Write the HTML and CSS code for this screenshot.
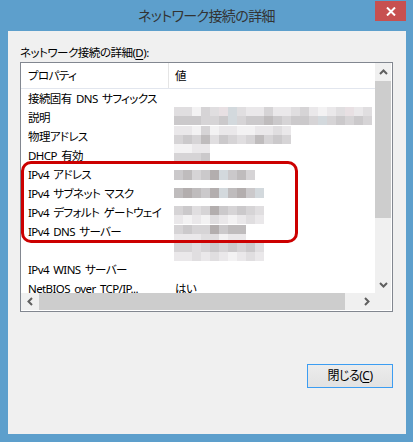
FILE: index.html
```html
<!DOCTYPE html>
<html lang="ja">
<head>
<meta charset="utf-8">
<title>ネットワーク接続の詳細</title>
<link rel="stylesheet" href="styles.css">
</head>
<body>
<div class="window">
  <div class="titlebar">
    <div class="title">ネットワーク接続の詳細</div>
    <div class="close">
      <svg width="10" height="9" viewBox="0 0 10 9"><path d="M1 0.5 L9 8.5 M9 0.5 L1 8.5" stroke="#fff" stroke-width="2" fill="none"/></svg>
    </div>
  </div>
  <div class="client">
    <div class="label">ネットワーク接続の詳細(<u>D</u>):</div>
    <div class="listbox">
      <div class="list">
        <div class="header">
          <div class="hcell name">プロパティ</div>
          <div class="hcell val">値</div>
        </div>
        <div class="row"><div class="name">接続固有 DNS サフィックス</div><div class="val"></div></div>
        <div class="row"><div class="name">説明</div><div class="val">
          <div class="mosaic m-up">
            <div class="mrow"><i class="g2"></i><i class="g2"></i><i class="g0"></i><i class="g3"></i><i class="g2"></i><i class="g8"></i><i class="g7"></i><i class="g2"></i><i class="g1"></i><i class="g1"></i><i class="g3"></i><i class="g1"></i><i class="g1"></i><i class="g2"></i><i class="g3"></i><i class="g1"></i><i class="g0"></i><i class="g1"></i><i class="g2"></i><i class="g8"></i><i class="g1"></i><i class="g2"></i></div>
            <div class="mrow"><i class="g4"></i><i class="g4"></i><i class="g4"></i><i class="g3"></i><i class="g3"></i><i class="g4"></i><i class="g7"></i><i class="g3"></i><i class="g4"></i><i class="g4"></i><i class="g5"></i><i class="g4"></i><i class="g3"></i><i class="g4"></i><i class="g4"></i><i class="g3"></i><i class="g7"></i><i class="g3"></i><i class="g4"></i><i class="g3"></i><i class="g4"></i><i class="g3"></i></div>
          </div>
        </div></div>
        <div class="row"><div class="name">物理アドレス</div><div class="val">
          <div class="mosaic m-up">
            <div class="mrow"><i class="g1"></i><i class="g1"></i><i class="g0"></i><i class="g3"></i><i class="g0"></i><i class="g1"></i><i class="g1"></i><i class="g0"></i><i class="g0"></i><i class="g1"></i><i class="g1"></i><i class="g2"></i><i class="g1"></i></div>
            <div class="mrow"><i class="g3"></i><i class="g4"></i><i class="g3"></i><i class="g5"></i><i class="g2"></i><i class="g4"></i><i class="g3"></i><i class="g2"></i><i class="g3"></i><i class="g5"></i><i class="g3"></i><i class="g4"></i><i class="g3"></i></div>
          </div>
        </div></div>
        <div class="row"><div class="name">DHCP 有効</div><div class="val">
          <div class="mosaic m-up2">
            <div class="mrow"><i class="g0"></i><i class="g0"></i><i class="g1"></i><i class="g1"></i></div>
            <div class="mrow"><i class="g3"></i><i class="g3"></i><i class="g3"></i><i class="g4"></i></div>
          </div>
        </div></div>
        <div class="row"><div class="name">IPv4 アドレス</div><div class="val">
          <div class="mosaic m-single">
            <div class="mrow tall"><i class="g4"></i><i class="g5"></i><i class="g3"></i><i class="g4"></i><i class="g6"></i><i class="g7"></i><i class="g4"></i><i class="g5"></i><i class="g3"></i></div>
          </div>
        </div></div>
        <div class="row"><div class="name">IPv4 サブネット マスク</div><div class="val">
          <div class="mosaic m-single2">
            <div class="mrow tall"><i class="g5"></i><i class="g6"></i><i class="g5"></i><i class="g4"></i><i class="g6"></i><i class="g7"></i><i class="g5"></i><i class="g6"></i><i class="g4"></i><i class="g7"></i></div>
          </div>
        </div></div>
        <div class="row"><div class="name">IPv4 デフォルト ゲートウェイ</div><div class="val">
          <div class="mosaic m-dn">
            <div class="mrow"><i class="g3"></i><i class="g4"></i><i class="g2"></i><i class="g3"></i><i class="g6"></i><i class="g4"></i><i class="g3"></i><i class="g4"></i><i class="g3"></i><i class="g2"></i></div>
            <div class="mrow"><i class="g1"></i><i class="g0"></i><i class="g1"></i><i class="g0"></i><i class="g2"></i><i class="g1"></i><i class="g0"></i><i class="g1"></i><i class="g2"></i><i class="g1"></i></div>
          </div>
        </div></div>
        <div class="row"><div class="name">IPv4 DNS サーバー</div><div class="val">
          <div class="mosaic m-dn">
            <div class="mrow"><i class="g3"></i><i class="g4"></i><i class="g3"></i><i class="g3"></i><i class="g6"></i><i class="g4"></i><i class="g5"></i><i class="g5"></i></div>
            <div class="mrow"><i class="g1"></i><i class="g1"></i><i class="g1"></i><i class="g2"></i><i class="g2"></i><i class="g0"></i><i class="g1"></i><i class="g1"></i></div>
          </div>
        </div></div>
        <div class="row"><div class="name"></div><div class="val">
          <div class="mosaic m-dn2">
            <div class="mrow"><i class="g3"></i><i class="g3"></i><i class="g2"></i><i class="g3"></i><i class="g4"></i><i class="g3"></i><i class="g4"></i><i class="g3"></i><i class="g4"></i><i class="g2"></i></div>
            <div class="mrow"><i class="g1"></i><i class="g1"></i><i class="g2"></i><i class="g1"></i><i class="g2"></i><i class="g1"></i><i class="g0"></i><i class="g1"></i><i class="g2"></i><i class="g1"></i></div>
          </div>
        </div></div>
        <div class="row"><div class="name">IPv4 WINS サーバー</div><div class="val"></div></div>
        <div class="row"><div class="name">NetBIOS over TCP/IP...</div><div class="val text">はい</div></div>
      </div>
      <div class="vscroll">
        <div class="sbtn"><svg width="9" height="6" viewBox="0 0 9 6"><path d="M1 5 L4.5 1.5 L8 5" stroke="#5f5f5f" stroke-width="2" fill="none"/></svg></div>
        <div class="vtrack"><div class="vthumb"></div></div>
        <div class="sbtn"><svg width="9" height="6" viewBox="0 0 9 6"><path d="M1 1 L4.5 4.5 L8 1" stroke="#5f5f5f" stroke-width="2" fill="none"/></svg></div>
      </div>
      <div class="hscroll">
        <div class="sbtn"><svg width="6" height="9" viewBox="0 0 6 9"><path d="M5 1 L1.5 4.5 L5 8" stroke="#5f5f5f" stroke-width="2" fill="none"/></svg></div>
        <div class="htrack"><div class="hthumb"></div></div>
        <div class="sbtn"><svg width="6" height="9" viewBox="0 0 6 9"><path d="M1 1 L4.5 4.5 L1 8" stroke="#5f5f5f" stroke-width="2" fill="none"/></svg></div>
      </div>
      <div class="corner"></div>
    </div>
    <div class="actions">
      <div class="button">閉じる(<u>C</u>)</div>
    </div>
  </div>
  <div class="highlight"></div>
</div>
</body>
</html>
```

FILE: styles.css
```css
* { box-sizing: border-box; }
html, body { margin: 0; padding: 0; }
body {
  width: 413px;
  height: 442px;
  overflow: hidden;
  font-family: "Noto Sans", "Noto Sans CJK JP", sans-serif;
  font-feature-settings: "palt";
  font-size: 12px;
  color: #000;
}
.window {
  position: relative;
  width: 413px;
  height: 442px;
  background: #5d9fcc;
  display: flex;
  flex-direction: column;
}
.titlebar {
  height: 31px;
  display: grid;
  grid-template-columns: 1fr auto 1fr;
  align-items: start;
}
.title {
  grid-column: 2;
  font-family: "Noto Sans CJK JP", sans-serif;
  font-size: 14px;
  letter-spacing: -0.6px;
  line-height: 31px;
  color: #333;
  white-space: nowrap;
}
.close {
  grid-column: 3;
  justify-self: end;
  width: 31px;
  height: 20px;
  margin-top: 1px;
  margin-right: 7px;
  background: #c75050;
  display: flex;
  align-items: center;
  justify-content: center;
}
.close svg { display: block; }
.client {
  flex: 1;
  margin: 0 7px 8px 8px;
  background: #f0f0f0;
  padding: 14px 13px 0 12px;
  display: flex;
  flex-direction: column;
}
.label {
  height: 16px;
  line-height: 16px;
  margin-bottom: 1px;
  font-size: 11.5px;
  letter-spacing: -0.5px;
  white-space: nowrap;
}
.label u, .button u { text-decoration-thickness: 1px; text-underline-offset: 2px; }
.listbox {
  height: 250px;
  border: 1px solid #828790;
  background: #fff;
  padding: 0 1px 1px 0;
  display: grid;
  grid-template-columns: 1fr 16px;
  grid-template-rows: 1fr 17px;
}
.list {
  overflow: hidden;
  white-space: nowrap;
  font-size: 11.5px;
  letter-spacing: -0.6px;
  word-spacing: 2px;
}
.header {
  height: 26px;
  border-bottom: 1px solid #e2e6ee;
  display: grid;
  grid-template-columns: 148px 1fr;
}
.hcell {
  line-height: 25px;
}
.header .name { border-right: 1px solid #e5e5e5; padding-left: 7px; }
.header .val { padding-left: 6px; }
.row {
  height: 19px;
  display: grid;
  grid-template-columns: 148px 1fr;
  line-height: 20px;
}
.row .name { padding-left: 7px; overflow: visible; }
.row .val { padding-left: 5px; overflow: visible; min-width: 0; }
.row .val.text { padding-left: 6px; }
.mosaic { display: flex; flex-direction: column; }
.mrow { display: flex; height: 9px; }
.mrow.tall { height: 10px; }
.mrow i { flex: none; width: 9px; height: 100%; }
.m-up { margin-top: -1px; }
.m-up2 { margin-top: -2px; }
.m-single { margin-top: 5px; }
.m-single2 { margin-top: 4px; }
.m-dn { margin-top: 3px; }
.m-dn2 { margin-top: 2px; }
.g0 { background: #f3f2f3; }
.g1 { background: #eae8ea; }
.g2 { background: #e0dee0; }
.g3 { background: #d6d4d6; }
.g4 { background: #cbc9cb; }
.g5 { background: #bfbcbd; }
.g6 { background: #b3aeae; }
.g7 { background: #d3d9dd; }
.g8 { background: #e8e0e3; }
.vscroll {
  background: #f0f0f0;
  display: grid;
  grid-template-rows: 17px 1fr 17px;
}
.sbtn {
  display: flex;
  align-items: center;
  justify-content: center;
}
.sbtn svg { display: block; }
.vtrack { padding-top: 1px; }
.vthumb { height: 137px; background: #cdcdcd; }
.hscroll {
  background: #f0f0f0;
  display: grid;
  grid-template-columns: 17px 1fr 17px;
}
.htrack { padding-left: 1px; }
.hthumb { width: 306px; height: 100%; background: #cdcdcd; }
.corner { background: #f0f0f0; }
.actions {
  display: flex;
  justify-content: flex-end;
  margin-top: 52px;
}
.button {
  width: 86px;
  height: 24px;
  border: 1px solid #3c9df2;
  background: linear-gradient(#ececec, #e2e2e2);
  display: flex;
  align-items: center;
  justify-content: center;
  line-height: 20px;
  letter-spacing: -0.5px;
}
.highlight {
  position: absolute;
  left: 21px;
  top: 161px;
  width: 277px;
  height: 82px;
  border: 3px solid #cc0000;
  border-radius: 10px;
}
```
